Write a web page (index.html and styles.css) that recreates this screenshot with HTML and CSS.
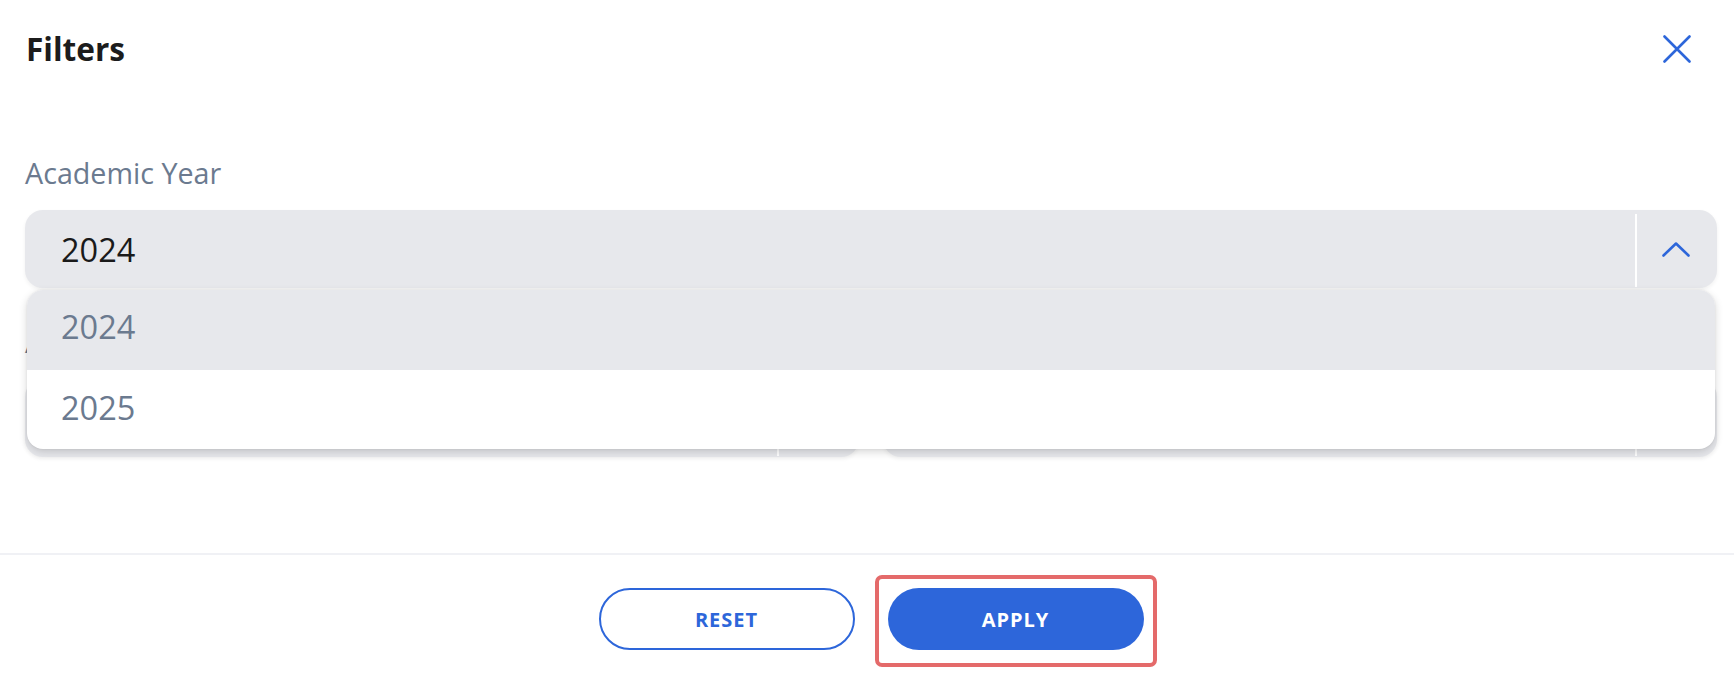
FILE: index.html
```html
<!DOCTYPE html>
<html lang="en">
<head>
<meta charset="utf-8">
<title>Filters</title>
<link rel="stylesheet" href="styles.css">
</head>
<body>
<div class="modal">
  <div class="content">
    <header class="header">
      <h1 class="title">Filters</h1>
      <button class="close" aria-label="Close">
        <svg width="28" height="28" viewBox="0 0 28 28"><path d="M1.5 1.5 L26.5 26.5 M26.5 1.5 L1.5 26.5" fill="none" stroke="#2d66da" stroke-width="2.6" stroke-linecap="round"/></svg>
      </button>
    </header>

    <div class="field field-first">
      <label class="label">Academic Year</label>
      <div class="select-wrap">
        <div class="select">
          <span class="value">2024</span>
          <span class="sep"></span>
          <span class="indicator">
            <svg width="28" height="15" viewBox="0 0 28 15"><path d="M1.5 13.5 L14 1.5 L26.5 13.5" fill="none" stroke="#2d66da" stroke-width="2.6" stroke-linecap="round" stroke-linejoin="round"/></svg>
          </span>
        </div>
        <div class="menu">
          <div class="option option-active">2024</div>
          <div class="option">2025</div>
        </div>
      </div>
    </div>

    <div class="row">
      <div class="field">
        <label class="label">Academic Term</label>
        <div class="select">
          <span class="value muted">Select...</span>
          <span class="sep"></span>
          <span class="indicator">
            <svg width="28" height="15" viewBox="0 0 28 15"><path d="M1.5 1.5 L14 13.5 L26.5 1.5" fill="none" stroke="#2d66da" stroke-width="2.6" stroke-linecap="round" stroke-linejoin="round"/></svg>
          </span>
        </div>
      </div>
      <div class="field">
        <label class="label">Class</label>
        <div class="select">
          <span class="value muted">Select...</span>
          <span class="sep"></span>
          <span class="indicator">
            <svg width="28" height="15" viewBox="0 0 28 15"><path d="M1.5 1.5 L14 13.5 L26.5 1.5" fill="none" stroke="#2d66da" stroke-width="2.6" stroke-linecap="round" stroke-linejoin="round"/></svg>
          </span>
        </div>
      </div>
    </div>
  </div>

  <footer class="footer">
    <div class="actions">
      <button class="btn btn-outline">RESET</button>
      <div class="highlight">
        <button class="btn btn-primary">APPLY</button>
      </div>
    </div>
  </footer>
</div>
</body>
</html>
```

FILE: styles.css
```css
* { box-sizing: border-box; }

html, body {
  margin: 0;
  padding: 0;
  background: #ffffff;
}

body {
  font-family: "Open Sans", "Noto Sans", Arial, sans-serif;
  width: 1734px;
  height: 675px;
  overflow: hidden;
}

.modal {
  display: flex;
  flex-direction: column;
}

.content {
  padding: 28px 17px 0 25px;
  height: 553px;
}

.header {
  display: flex;
  align-items: center;
  justify-content: space-between;
  height: 42px;
}

.title {
  margin: 0 0 0 1px;
  font-size: 31.6px;
  line-height: 42px;
  font-weight: 700;
  color: #1c1c1c;
}

.close {
  border: 0;
  background: transparent;
  padding: 0;
  margin-right: 26px;
  width: 28px;
  height: 28px;
  display: flex;
}

.field {
  display: flex;
  flex-direction: column;
}

.field-first {
  margin-top: 83px;
}

.label {
  font-size: 28.7px;
  line-height: 40px;
  color: #6b7a8f;
  margin-bottom: 17px;
}

.select-wrap {
  position: relative;
}

.select {
  display: flex;
  align-items: stretch;
  height: 78px;
  background: #e7e8ec;
  border-radius: 18px;
  box-shadow: 0 2px 4px rgba(0, 0, 0, 0.06);
}

.value {
  flex: 1;
  display: flex;
  align-items: center;
  padding-left: 36px;
  font-size: 32.5px;
  color: #1a1a1a;
}

.value.muted {
  color: #8a96a6;
}

.sep {
  width: 2px;
  background: #ffffff;
  margin: 4px 0 1px;
}

.indicator {
  width: 80px;
  display: flex;
  align-items: center;
  justify-content: center;
  padding-right: 2px;
}

.menu {
  position: absolute;
  top: 80px;
  left: 2px;
  right: 2px;
  z-index: 10;
  background: #ffffff;
  border-radius: 16px;
  overflow: hidden;
  box-shadow: 0 3px 8px rgba(0, 0, 0, 0.16), 0 0 2px rgba(0, 0, 0, 0.08);
}

.option {
  height: 79px;
  display: flex;
  align-items: center;
  padding-left: 34px;
  padding-bottom: 4px;
  font-size: 32.5px;
  color: #6b7a8f;
}

.option-active {
  background: #e7e8ec;
  height: 80px;
  padding-bottom: 7px;
}

.row {
  display: grid;
  grid-template-columns: 1fr 1fr;
  column-gap: 24px;
  margin-top: 34px;
}

.footer {
  border-top: 2px solid #f0f1f5;
  padding: 20px 17px 0 25px;
}

.actions {
  display: flex;
  justify-content: center;
  align-items: flex-start;
  gap: 33px;
}

.highlight {
  border: 4px solid #e46a6a;
  border-radius: 7px;
  padding: 9px 9px 13px 9px;
  margin: 0 -13px -17px -13px;
}

.btn {
  width: 256px;
  height: 62px;
  border-radius: 31px;
  font-family: "Open Sans", "Noto Sans", Arial, sans-serif;
  font-size: 20px;
  font-weight: 700;
  letter-spacing: 1px;
  cursor: pointer;
  display: block;
}

.btn-outline {
  margin-top: 13px;
  background: #ffffff;
  color: #2d66da;
  border: 2px solid #2d66da;
}

.btn-primary {
  background: #2d66da;
  color: #ffffff;
  border: 0;
}
```
